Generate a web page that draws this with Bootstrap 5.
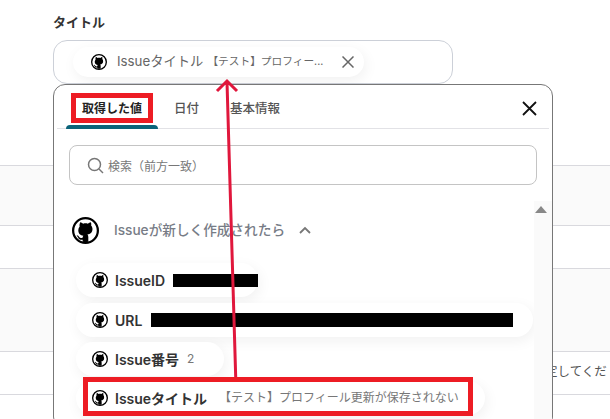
<!DOCTYPE html>
<html lang="ja"><head><meta charset="utf-8">
<link href="https://cdn.jsdelivr.net/npm/bootstrap@5.3.0/dist/css/bootstrap.min.css" rel="stylesheet">
<style>
html,body{height:419px;overflow:hidden;background:#fff}
body{position:relative;font-family:"Inter","Noto Sans CJK JP",sans-serif;color:#333;font-size:13px}
.stage{padding:14px 0 0 53px;height:419px;overflow:hidden}
.ttl{font-weight:600;font-size:13px;line-height:16px;margin-bottom:10px;color:#333}
.field{width:400px;height:44px;border:1px solid #ccd0d8;border-radius:14px;padding:6px 0 0 19px}
.tag{display:inline-flex;align-items:center;background:#fff;border-radius:17px;box-shadow:2px 4px 14px rgba(0,0,0,.06)}
.maintag{width:291px;height:30px;padding:0 10px 0 18px;color:#666;white-space:nowrap}
.maintag .tname{margin-left:10px;font-size:13.300px}
.maintag .tval{margin-left:4px;font-size:10.700px;flex:1}
.bgrows{margin-top:81px;margin-left:-53px}
.brow{border-top:1px solid #d9d9de;padding-left:520px;white-space:nowrap;color:#555;font-size:12.500px}
.h60{height:60px;background:#fafafa}.h43{height:43px}.h83{height:83px;background:#fafafa}
.lower{padding-top:11px;line-height:18px}
.panel{position:absolute;left:53px;top:84px;width:500px;height:345px;background:#fff;border:1px solid #777;border-radius:12px;padding:0}
.tabbar{height:44px;border-bottom:1px solid #e2e2e6;margin:0 3px;display:flex;padding-left:9px;font-weight:500;font-size:12.500px;position:relative}
.tabitem{padding:16px 0 0;line-height:16px;color:#555}
.on{width:92px;text-align:center;color:#222;position:relative;font-weight:600;font-size:12px}
.on::after{content:"";position:absolute;left:0;right:0;bottom:-1px;height:4px;background:#0b6379;border-radius:4px 4px 0 0}
.t2{margin-left:16px}.t3{margin-left:31px}
.closex{position:absolute;right:12px;top:16px}
.srch{margin:16px 15px 0;height:40px;border:1px solid #c4c4c4;border-radius:8px;display:flex;align-items:center;padding-left:17px;color:#777;font-size:12px;gap:4px}
.srch span{padding-top:3px}
.grp{display:flex;align-items:center;margin:31px 0 0 18px;height:28px;color:#777c86;font-weight:500;font-size:13.650px}
.grp .gname{margin-left:15px}
.chev{margin-left:14px}
.list{margin:19px 0 0 22px;display:flex;flex-direction:column;gap:5px;align-items:flex-start}
.item{height:34px;padding:0 0 0 16px;color:#333;white-space:nowrap}
.item b{font-weight:600;font-size:14px;margin-left:7px}
.item span.v{color:#777;font-size:12px}
.item2{margin-top:1px}
.mask{display:inline-block;background:#000;height:14px;margin-left:8px}
.mask1{height:13px}.mask2{margin-left:9px}
.tv{margin-left:12px}
.sbar{position:absolute;left:480px;top:116px;width:18px;height:228px;background:#fafafa}
.sbar i{display:block;width:0;height:0;border:6px solid transparent;border-top:0;border-bottom:7px solid #888;margin:5px 0 0 1px}
.redbox{position:absolute;border:5px solid #ed1c24;pointer-events:none}
.arrowsvg{position:absolute;left:0;top:0}
</style></head><body>
<svg width="0" height="0" class="position-absolute"><defs>
<symbol id="gh" viewBox="0 0 24 24"><circle cx="12" cy="12" r="11" fill="#fff" stroke="#000" stroke-width="2"/><path fill="#000" d="M7.200 4.600c1 .1 2 .7 2.700 1.300.7-.2 1.400-.3 2.100-.3s1.400.1 2.100.3c.7-.6 1.700-1.200 2.700-1.300.4 1 .5 2 .2 2.900.8.900 1.200 2 1.200 3.200 0 3.300-2 4.500-4.500 4.900.5.500.8 1.200.8 2.100v4.200c-.8.200-1.600.300-2.500.300s-1.700-.1-2.500-.3v-1.700c-1.900.4-3.500-.2-4.200-2.200-.3-.6-.6-.9-1.100-1.200l.2-.5c.9.200 1.500.7 2 1.500.6 1 1.700 1.100 3 .6 0-.7.300-1.300.7-1.800-2.500-.4-4.500-1.600-4.500-4.900 0-1.200.4-2.300 1.200-3.200-.3-.9-.2-1.900.2-2.900z"/></symbol>
</defs></svg>
<div class="stage">
  <div class="ttl">タイトル</div>
  <div class="field">
    <div class="tag maintag"><svg width="16" height="16"><use href="#gh"/></svg><span class="tname">Issueタイトル</span><span class="tval">【テスト】プロフィー...</span>
      <svg width="12" height="12" viewBox="0 0 12 12"><path d="M.5.500 11.500 11.500M11.500.5.500 11.500" stroke="#666" stroke-width="1.500"/></svg></div>
  </div>
  <div class="bgrows">
    <div class="brow h60"></div><div class="brow h43"></div><div class="brow h83"></div>
    <div class="brow h43 lower">を設定してくだ</div><div class="brow h43"></div>
  </div>
</div>
<div class="panel">
  <div class="tabbar">
    <div class="tabitem on">取得した値</div>
    <div class="tabitem t2">日付</div>
    <div class="tabitem t3">基本情報</div>
    <svg class="closex" width="15" height="15" viewBox="0 0 15 15"><path d="M1 1 14 14M14 1 1 14" stroke="#111" stroke-width="1.800"/></svg>
  </div>
  <div class="srch"><svg width="17" height="17" viewBox="0 0 17 17" fill="none" stroke="#777" stroke-width="1.500"><circle cx="7.500" cy="7.500" r="6"/><path d="m12 12 4 4"/></svg><span>検索（前方一致）</span></div>
  <div class="grp"><svg width="27" height="27"><use href="#gh"/></svg><span class="gname">Issueが新しく作成されたら</span>
    <svg class="chev" width="12" height="8" viewBox="0 0 12 8" fill="none" stroke="#777" stroke-width="1.800"><path d="m1 7 5-5 5 5"/></svg></div>
  <div class="list">
    <div class="tag item"><svg width="16" height="16"><use href="#gh"/></svg><b>IssueID</b><span class="mask mask1" style="width:85px"></span></div>
    <div class="tag item item2" style="width:457px"><svg width="16" height="16"><use href="#gh"/></svg><b>URL</b><span class="mask mask2" style="width:362px"></span></div>
    <div class="tag item" style="width:148px"><svg width="16" height="16"><use href="#gh"/></svg><b>Issue番号</b><span class="v ms-2">2</span></div>
    <div class="tag item" style="width:409px"><svg width="16" height="16"><use href="#gh"/></svg><b>Issueタイトル</b><span class="v tv">【テスト】プロフィール更新が保存されない</span></div>
  </div>
  <div class="sbar"><i></i></div>
</div>
<div class="redbox" style="left:71px;top:93px;width:82px;height:30px"></div>
<div class="redbox" style="left:83px;top:377px;width:390px;height:39px"></div>
<svg class="arrowsvg" width="610" height="419" viewBox="0 0 610 419" fill="none" stroke="#e0173c" stroke-width="3"><path d="M235.700 377 227 82M217 91 227 81 237 91"/></svg>
</body></html>
